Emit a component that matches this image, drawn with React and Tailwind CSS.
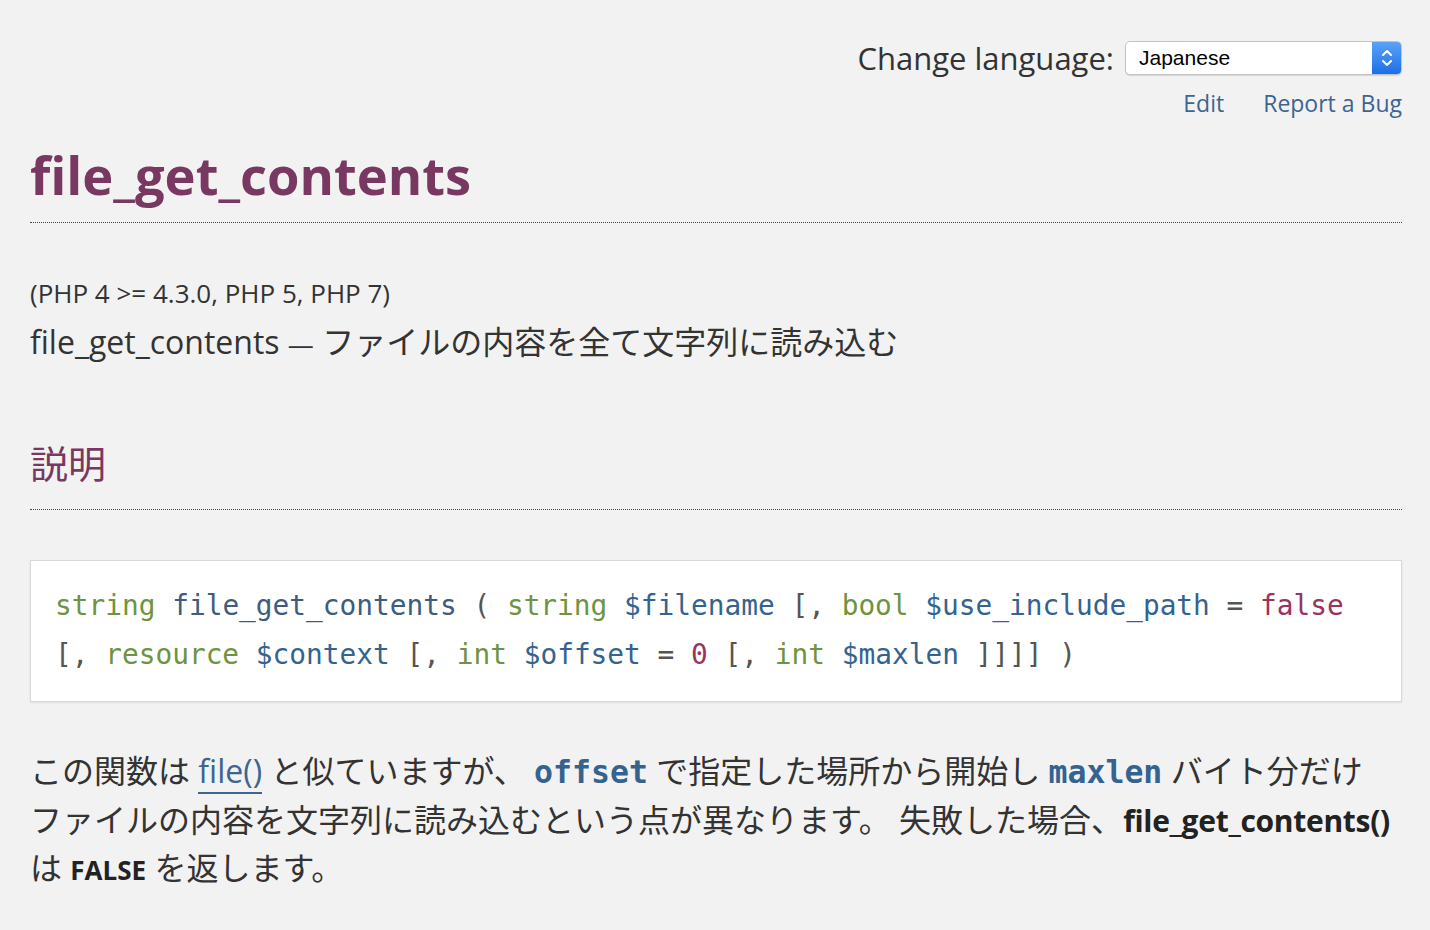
import React from 'react';

const sans = { fontFamily: '"Open Sans", "Noto Sans CJK JP", sans-serif' };

function LangSelect() {
  return (
    <div className="flex h-[34px] w-[277px] items-stretch overflow-hidden rounded-[5px] border border-[#c4c4c4] bg-white shadow-[0_1px_1px_rgba(0,0,0,0.12)]">
      <div className="flex flex-1 items-center pl-[13px] font-['Liberation_Sans',sans-serif] text-[21px] text-black">Japanese</div>
      <div className="flex w-[29px] items-center justify-center bg-gradient-to-b from-[#5aa2f7] to-[#1a6fe6]">
        <svg width="14" height="22" viewBox="0 0 14 22" fill="none" stroke="white" strokeWidth="2" strokeLinecap="round" strokeLinejoin="round">
          <path d="M3 8 L7 4 L11 8" />
          <path d="M3 14 L7 18 L11 14" />
        </svg>
      </div>
    </div>
  );
}

function Code({ children, className = '' }) {
  return <span className={className}>{children}</span>;
}

export default function App() {
  return (
    <div className="min-h-[930px] bg-[#f2f2f2] pl-[30px] pr-[28px] pt-[41px] text-[#333]" style={sans}>
      {/* top right tools */}
      <div className="flex flex-col items-end">
        <div className="flex items-center gap-[11px]">
          <span className="text-[31px] leading-none text-[#333]">Change language:</span>
          <LangSelect />
        </div>
        <div className="mt-[13px] flex gap-[39px] text-[23px] leading-[30px] text-[#3d6590]">
          <a>Edit</a>
          <a>Report a Bug</a>
        </div>
      </div>

      {/* title */}
      <h1 className="mt-[22px] border-b border-dotted border-[#444] pb-[12px] text-[52.5px] font-bold leading-[70px] text-[#793862]">
        file_get_contents
      </h1>

      <div className="mt-[50px] text-[26px] leading-[40px]">(PHP 4 &gt;= 4.3.0, PHP 5, PHP 7)</div>
      <div className="mt-[9px] text-[32px] leading-[40px]">
        file_get_contents <span className="text-[26px]">—</span> ファイルの内容を全て文字列に読み込む
      </div>

      {/* description */}
      <h2 className="mt-[75px] border-b border-dotted border-[#444] pb-[22px] text-[38px] font-normal leading-[48px] text-[#793862]">
        説明
      </h2>

      <div className="mt-[50px] border border-[#d8d8d8] bg-white px-[24px] pb-[22px] pt-[20px] font-['DejaVu_Sans_Mono',monospace] text-[27.8px] leading-[49px] text-[#555] shadow-[0_1px_2px_rgba(0,0,0,0.08)]">
        <div className="whitespace-pre">
          <Code className="text-[#6f9340]">string</Code> <Code className="text-[#3e5c80]">file_get_contents</Code> ( <Code className="text-[#6f9340]">string</Code> <Code className="text-[#35638f]">$filename</Code> [, <Code className="text-[#6f9340]">bool</Code> <Code className="text-[#35638f]">$use_include_path</Code> = <Code className="text-[#99335f]">false</Code>
        </div>
        <div className="whitespace-pre">
          [, <Code className="text-[#6f9340]">resource</Code> <Code className="text-[#35638f]">$context</Code> [, <Code className="text-[#6f9340]">int</Code> <Code className="text-[#35638f]">$offset</Code> = <Code className="text-[#99335f]">0</Code> [, <Code className="text-[#6f9340]">int</Code> <Code className="text-[#35638f]">$maxlen</Code> ]]]] )
        </div>
      </div>

      <p className="mt-[45px] text-[32px] leading-[48.5px] text-[#333]">
        この関数は <a className="border-b-2 border-[#3d6590] text-[#3d6590]">file()</a> と似ていますが、 <code className="font-['DejaVu_Sans_Mono',monospace] text-[31.5px] font-bold leading-none text-[#35638f]">offset</code> で指定した場所から開始し <code className="font-['DejaVu_Sans_Mono',monospace] text-[31.5px] font-bold leading-none text-[#35638f]">maxlen</code> バイト分だけ
        <br />
        ファイルの内容を文字列に読み込むという点が異なります。 失敗した場合、<strong className="whitespace-nowrap text-[30px] font-bold leading-none tracking-[-0.3px] text-[#222]">file_get_contents()</strong>
        <br />
        は <strong className="text-[26px] font-bold leading-none text-[#222]">FALSE</strong> を返します。
      </p>
    </div>
  );
}
